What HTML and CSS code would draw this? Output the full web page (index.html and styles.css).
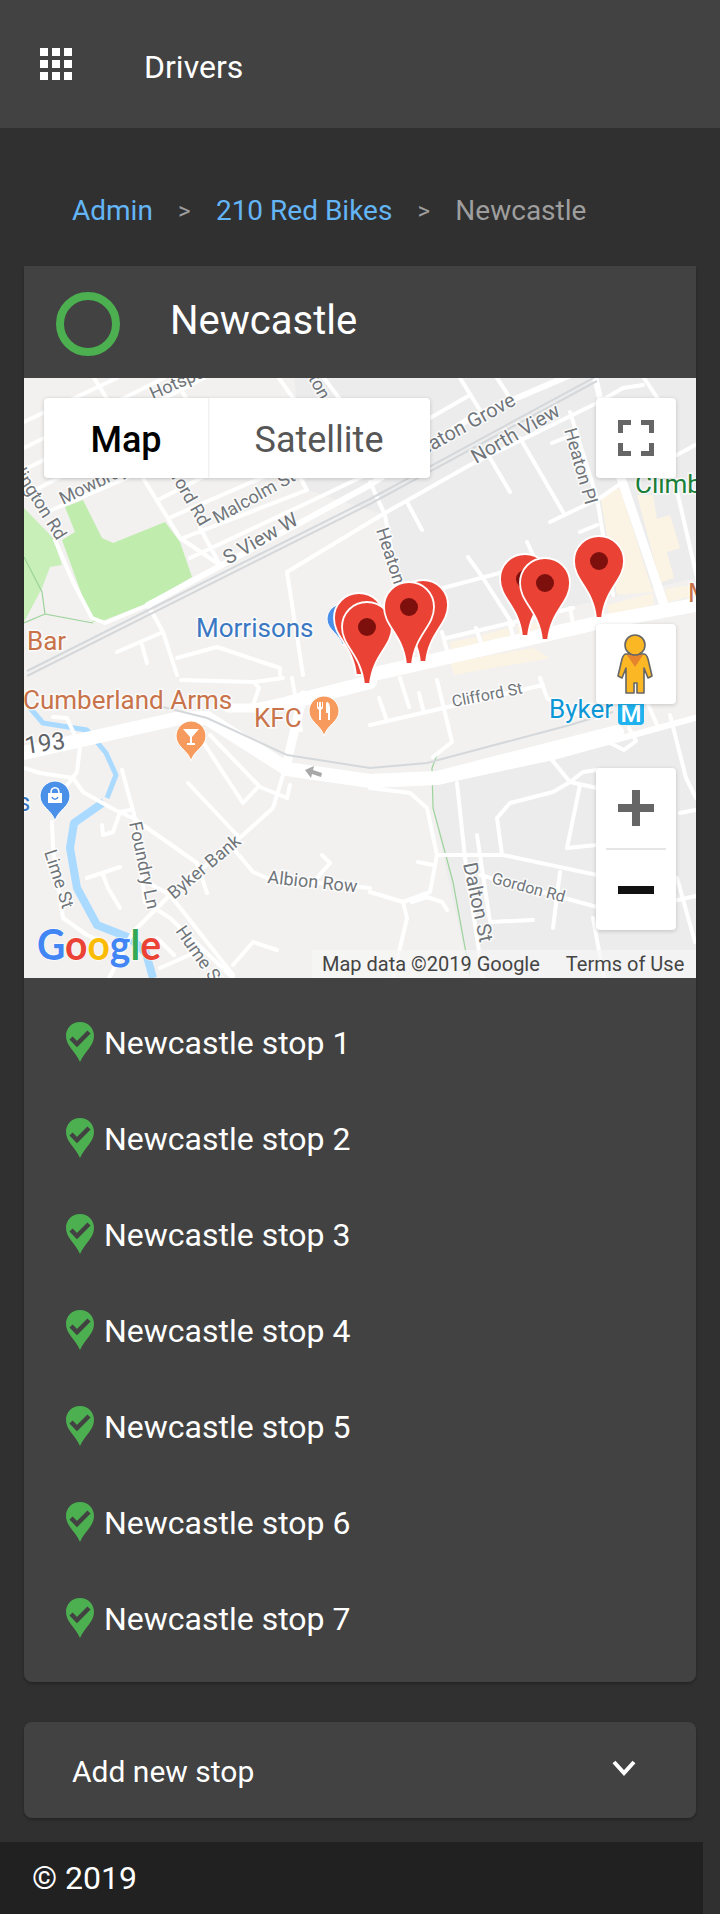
FILE: index.html
```html
<!DOCTYPE html>
<html lang="en">
<head>
<meta charset="utf-8">
<title>Drivers</title>
<link rel="stylesheet" href="styles.css">
</head>
<body>
<header class="topbar">
  <svg class="apps" viewBox="0 0 32 32"><path d="M0 0h8v8H0zM12 0h8v8h-8zM24 0h8v8h-8zM0 12h8v8H0zM12 12h8v8h-8zM24 12h8v8h-8zM0 24h8v8H0zM12 24h8v8h-8zM24 24h8v8h-8z"/></svg>
  <span class="topbar-title">Drivers</span>
</header>
<nav class="crumbs">
  <a class="crumb-link">Admin</a><span class="crumb-sep">&gt;</span><a class="crumb-link">210 Red Bikes</a><span class="crumb-sep">&gt;</span><span class="crumb-current">Newcastle</span>
</nav>
<main class="card">
  <div class="card-head">
    <span class="ring"></span>
    <h1 class="card-title">Newcastle</h1>
  </div>
  <div class="map">
    <svg class="map-art" viewBox="0 0 672 600">
      <rect class="land" width="672" height="600"/>
      <path class="land-dark" d="M361 137 373 204 420 258 672 200V0H270L283 112Z"/>
      <path class="land-dark" d="M410 405 672 340V600H446L409 430Z"/>
      <path class="park-light" d="M0 130 29 160 38 187 26 189 18 210 0 244Z"/>
      <path class="park" d="M41 129 59 122 78 160 89 165 141 144 156 164 168 199 124 225 81 242 69 244 59 220 38 162 51 154Z"/>
      <path class="retail" d="M576 117 596 110 629 214 593 217ZM613 117 629 117 633 141 646 137 656 170 643 174 650 200 636 205ZM426 264 453 259 454 272 428 275ZM458 257 484 250 488 262 459 267ZM493 247 519 244 522 258 495 262ZM583 227 629 215 629 227 585 239ZM641 211 672 206 672 217 643 224ZM426 284 509 270 526 280 430 297Z"/>
      <g class="river">
        <path d="M6 330 19 345 63 352 82 375 92 397 83 420"/>
        <path class="river-wide" d="M80 424 50 445 46 470 53 510 73 547 106 560 122 575 129 600"/>
      </g>
      <path class="bound" d="M0 179 18 214 21 236 69 245M0 245 21 236M413 377 408 390 409 430 429 504 446 597"/>
      <g class="road">
        <!-- north-west terraces -->
        <path d="M0 44 93 0M0 70 140 0M0 92 180 0M0 118 60 86M23 134 103 100M134 122 183 97M145 140 283 80M159 160 283 112 268 85M166 180 283 125 346 95M119 100 156 160 196 187M176 150 196 187M70 0 98 45M150 0 180 50M255 0 283 40M300 0 330 40"/>
        <path d="M31 162 49 204 68 240 81 245 124 227"/>
        <path d="M124 227 139 254 153 297M93 274 139 254M118 267 123 285M153 280 193 269 256 290 256 297M263 194 279 297"/>
        <!-- north-east -->
        <path d="M263 194 346 144 361 135 446 87 573 25 599 10 619 7"/>
        <path d="M436 0 459 37M473 0 486 20M406 40 446 17M346 104 361 137 373 204M383 124 398 152M466 80 486 114M496 60 539 134M526 144 576 120 599 104M546 34 573 120 589 217M556 154 573 147M528 65 543 59M653 77 671 67M620 0 640 30 650 100 680 230M503 164 509 177M444 179 459 200 489 247M419 210 506 187M418 254 426 284M452 250 458 268M485 244 490 262M546 230 550 250M423 260 549 230"/>
        <!-- south-west -->
        <path d="M29 339 43 340 56 369 53 394 41 410M0 390 16 395 49 400 59 414 91 432 109 440 173 485 183 515M78 447 79 457 89 454 96 434 106 432M63 500 96 489M79 497 84 510 96 530M28 444 29 470 39 540 63 557 85 567M98 392 111 440 121 524 146 540 209 600M123 504 146 517 209 597M85 600 109 554 146 517 219 457 249 430 259 397M179 364 219 425 234 409M186 357 236 409 263 420 266 407M164 405 213 457M209 470 229 494 243 500 346 510M298 477 306 485 293 500M209 587 229 564 253 572M133 560 150 577M136 590 170 575"/>
        <path d="M157 302 230 304 259 300M230 304 235 310 228 330M277 352 268 300"/>
        <!-- south-east -->
        <path d="M346 410 386 415 403 430 413 477 406 514 379 524 346 514M394 484 409 487M379 524 383 540 369 600M388 524 403 519 418 524 423 532"/>
        <path d="M433 405 441 480 459 600M453 457 466 544 509 542M413 477 479 477 573 497M456 497 573 529M536 494 529 550M556 407 543 470 573 467M473 440 486 425 529 414 546 404 559 394 573 392M473 440 478 477M528 382 546 404 573 410M656 435 671 432M646 337 662 400 672 420M653 500 671 564M569 540 580 600M640 525 672 518"/>
        <!-- shops -->
        <path d="M346 347 519 307M376 300 385 329M413 302 428 364 409 379M516 300 523 320 546 334 573 340M623 324 633 347M586 365 600 372 612 363 605 350M355 320 362 340M395 315 400 335"/>
      </g>
      <g class="road road-main">
        <path d="M-5 376 156 340 183 340 249 382 263 391 346 403 413 400 593 354"/>
        <path d="M264 325 346 304"/>
        <path d="M346 297 573 245 672 227"/>
      </g>
      <path class="road road-mid" d="M279 317 263 384M279 320 230 330 204 330M596 97 639 224"/>
      <path class="road road-fine" d="M413 404 529 379 671 340M124 227 346 107 446 40 563 -10M570 -5 576 20"/>
      <g class="rail">
        <path d="M3 293 346 121 573 -2"/>
        <path d="M3 298 346 126 573 3"/>
        <path d="M139 329 183 340 263 377 346 390 403 385 463 369 546 347 589 334"/>
      </g>
      <path class="arrow" d="M281 392 290 388 289 392 298 395 297 399 288 396 287 400Z"/>

      <g class="label">
        <text x="129" y="22" transform="rotate(-24 129 22)">Hotspur</text>
        <text x="284" y="0" transform="rotate(62 284 0)">ton</text>
        <text x="39" y="127" transform="rotate(-26 39 127)">Mowbray</text>
        <text x="176" y="149" text-anchor="end" transform="rotate(60 176 149)">Guildford Rd</text>
        <text x="33" y="163" text-anchor="end" transform="rotate(58 33 163)">Addington Rd</text>
        <text x="193" y="146" transform="rotate(-29 193 146)">Malcolm St</text>
        <text x="204" y="187" transform="rotate(-30 204 187)" class="label-lg">S View W</text>
        <text x="493" y="26" text-anchor="end" transform="rotate(-29 493 26)" class="label-lg">Heaton Grove</text>
        <text x="452" y="86" transform="rotate(-30 452 86)" class="label-lg">North View</text>
        <text x="540" y="52" transform="rotate(74 540 52)">Heaton Pl</text>
        <text x="352" y="152" transform="rotate(72 352 152)">Heaton</text>
        <text x="429" y="329" transform="rotate(-11 429 329)" class="label-sm">Clifford St</text>
        <text x="20" y="474" transform="rotate(72 20 474)">Lime St</text>
        <text x="105" y="445" transform="rotate(78 105 445)">Foundry Ln</text>
        <text x="150" y="522" transform="rotate(-40 150 522)">Byker Bank</text>
        <text x="243" y="505" transform="rotate(6 243 505)">Albion Row</text>
        <text x="151" y="553" transform="rotate(55 151 553)">Hume St</text>
        <text x="439" y="486" transform="rotate(78 439 486)" class="label-lg">Dalton St</text>
        <text x="467" y="505" transform="rotate(15 467 505)" class="label-sm">Gordon Rd</text>
        <text x="2" y="376" transform="rotate(-8 2 376)" class="label-road">193</text>
      </g>
      <g class="poi">
        <text x="3" y="272" class="poi-food">Bar</text>
        <text x="172" y="259" class="poi-shop">Morrisons</text>
        <text x="-1" y="331" class="poi-food">Cumberland Arms</text>
        <text x="230" y="349" class="poi-food">KFC</text>
        <text x="611" y="115" class="poi-green">Climb</text>
        <text x="664" y="224" class="poi-food">M</text>
        <text x="525" y="340" class="poi-transit">Byker</text>
        <text x="-7" y="433" class="poi-shop">s</text>
      </g>
      <path class="poi-blue" d="M318 226C326 226 333 233 333 241 333 252 322 256 319 268 316 256 303 252 303 241 303 233 310 226 318 226Z"/>
      <g transform="translate(167 358)">
        <path class="poi-orange" d="M0-15C8-15 15-8 15 0 15 11 3 14 0 25-3 14-15 11-15 0-15-8-8-15 0-15Z"/>
        <path class="poi-glyph" d="M-8-7H8L1 1V7H4V9H-4V7H-1V1Z"/>
      </g>
      <g transform="translate(300 333)">
        <path class="poi-orange" d="M0-15C8-15 15-8 15 0 15 11 3 14 0 25-3 14-15 11-15 0-15-8-8-15 0-15Z"/>
        <path class="poi-glyph" d="M-7-9V-3L-5-1V9H-3V-1L-1-3V-9H-2V-4H-3V-9H-5V-4H-6V-9ZM3-9C5-9 6-6 6-2V9H4V2H2V-5C2-7 2-9 3-9Z"/>
      </g>
      <g transform="translate(31 418)">
        <path class="poi-bluefill" d="M0-15C8-15 15-8 15 0 15 11 3 14 0 25-3 14-15 11-15 0-15-8-8-15 0-15Z"/>
        <path class="poi-glyph" d="M-7-3H7V7H-7Z"/>
        <path class="poi-bag" d="M-4-3C-4-10 4-10 4-3"/>
        <path class="poi-smile" d="M-3 1C-2 4 2 4 3 1"/>
      </g>
      <rect class="metro" x="594" y="322" width="26" height="25" rx="4"/>
      <text x="607" y="344" text-anchor="middle" class="metro-m">M</text>
      <g class="pins">
        <g transform="translate(335 215)"><path class="pin" d="M0 0C-14 0-25 11-25 25-25 45-6 52-3 82H3C6 52 25 45 25 25 25 11 14 0 0 0Z"/></g>
        <g transform="translate(343 224)"><path class="pin" d="M0 0C-14 0-25 11-25 25-25 45-6 52-3 82H3C6 52 25 45 25 25 25 11 14 0 0 0Z"/><circle class="pin-dot" cy="25" r="9"/></g>
        <g transform="translate(399 202)"><path class="pin" d="M0 0C-14 0-25 11-25 25-25 45-6 52-3 82H3C6 52 25 45 25 25 25 11 14 0 0 0Z"/></g>
        <g transform="translate(385 204)"><path class="pin" d="M0 0C-14 0-25 11-25 25-25 45-6 52-3 82H3C6 52 25 45 25 25 25 11 14 0 0 0Z"/><circle class="pin-dot" cy="25" r="9"/></g>
        <g transform="translate(501 176)"><path class="pin" d="M0 0C-14 0-25 11-25 25-25 45-6 52-3 82H3C6 52 25 45 25 25 25 11 14 0 0 0Z"/><circle class="pin-dot" cy="25" r="9"/></g>
        <g transform="translate(521 180)"><path class="pin" d="M0 0C-14 0-25 11-25 25-25 45-6 52-3 82H3C6 52 25 45 25 25 25 11 14 0 0 0Z"/><circle class="pin-dot" cy="25" r="9"/></g>
        <g transform="translate(575 158)"><path class="pin" d="M0 0C-14 0-25 11-25 25-25 45-6 52-3 82H3C6 52 25 45 25 25 25 11 14 0 0 0Z"/><circle class="pin-dot" cy="25" r="9"/></g>
      </g>
      <text x="13" y="582" class="google" textLength="124" lengthAdjust="spacingAndGlyphs"><tspan class="g-blue">G</tspan><tspan class="g-red">o</tspan><tspan class="g-yellow">o</tspan><tspan class="g-blue">g</tspan><tspan class="g-green">l</tspan><tspan class="g-red">e</tspan></text>
    </svg>
    <div class="map-type">
      <span class="map-type-btn map-type-on">Map</span>
      <span class="map-type-btn">Satellite</span>
    </div>
    <div class="map-tile map-full">
      <svg class="tile-icon" viewBox="0 0 36 36"><path d="M0 0H13V5H5V13H0ZM23 0H36V13H31V5H23ZM0 23H5V31H13V36H0ZM31 23H36V36H23V31H31Z"/></svg>
    </div>
    <div class="map-tile map-peg">
      <svg class="peg-icon" viewBox="0 0 80 80">
        <path class="peg-body" d="M30 30H48C50 30 51 32 52 35L56 52 52 54 48 44V69H41V59H38V69H30V44L26 54 22 52 26 35C27 32 28 30 30 30Z"/>
        <path class="peg-neck" d="M31 31H47L39 43Z"/>
        <circle class="peg-body" cx="39" cy="21" r="10"/>
      </svg>
    </div>
    <div class="map-zoom">
      <div class="zoom-btn"><svg class="tile-icon" viewBox="0 0 36 36"><path d="M14 0H22V14H36V22H22V36H14V22H0V14H14Z"/></svg></div>
      <div class="zoom-rule"></div>
      <div class="zoom-btn"><svg class="tile-icon tile-icon-dark" viewBox="0 0 36 36"><path d="M0 14H36V22H0Z"/></svg></div>
    </div>
    <div class="map-attr"><span>Map data ©2019 Google</span><span>Terms of Use</span></div>
  </div>
  <ul class="stops">
    <li class="stop"><svg class="stop-pin" viewBox="0 0 28 40"><path class="stop-pin-fill" d="M14 0C6 0 0 6 0 14 0 24 10 30 14 40 18 30 28 24 28 14 28 6 22 0 14 0Z"/><path class="stop-pin-check" d="M5 16 11 22 23 10"/></svg><span class="stop-name">Newcastle stop 1</span></li>
    <li class="stop"><svg class="stop-pin" viewBox="0 0 28 40"><path class="stop-pin-fill" d="M14 0C6 0 0 6 0 14 0 24 10 30 14 40 18 30 28 24 28 14 28 6 22 0 14 0Z"/><path class="stop-pin-check" d="M5 16 11 22 23 10"/></svg><span class="stop-name">Newcastle stop 2</span></li>
    <li class="stop"><svg class="stop-pin" viewBox="0 0 28 40"><path class="stop-pin-fill" d="M14 0C6 0 0 6 0 14 0 24 10 30 14 40 18 30 28 24 28 14 28 6 22 0 14 0Z"/><path class="stop-pin-check" d="M5 16 11 22 23 10"/></svg><span class="stop-name">Newcastle stop 3</span></li>
    <li class="stop"><svg class="stop-pin" viewBox="0 0 28 40"><path class="stop-pin-fill" d="M14 0C6 0 0 6 0 14 0 24 10 30 14 40 18 30 28 24 28 14 28 6 22 0 14 0Z"/><path class="stop-pin-check" d="M5 16 11 22 23 10"/></svg><span class="stop-name">Newcastle stop 4</span></li>
    <li class="stop"><svg class="stop-pin" viewBox="0 0 28 40"><path class="stop-pin-fill" d="M14 0C6 0 0 6 0 14 0 24 10 30 14 40 18 30 28 24 28 14 28 6 22 0 14 0Z"/><path class="stop-pin-check" d="M5 16 11 22 23 10"/></svg><span class="stop-name">Newcastle stop 5</span></li>
    <li class="stop"><svg class="stop-pin" viewBox="0 0 28 40"><path class="stop-pin-fill" d="M14 0C6 0 0 6 0 14 0 24 10 30 14 40 18 30 28 24 28 14 28 6 22 0 14 0Z"/><path class="stop-pin-check" d="M5 16 11 22 23 10"/></svg><span class="stop-name">Newcastle stop 6</span></li>
    <li class="stop"><svg class="stop-pin" viewBox="0 0 28 40"><path class="stop-pin-fill" d="M14 0C6 0 0 6 0 14 0 24 10 30 14 40 18 30 28 24 28 14 28 6 22 0 14 0Z"/><path class="stop-pin-check" d="M5 16 11 22 23 10"/></svg><span class="stop-name">Newcastle stop 7</span></li>
  </ul>
</main>
<section class="add-stop">
  <span class="add-label">Add new stop</span>
  <svg class="chevron" viewBox="0 0 24 16"><path d="M2 2 12 13 22 2"/></svg>
</section>
<footer class="foot">© 2019</footer>
</body>
</html>
```
FILE: styles.css
```css
* { box-sizing: border-box; }
html, body { margin: 0; padding: 0; }
body {
  width: 720px;
  height: 1914px;
  overflow: hidden;
  background: #303030;
  color: #fff;
  font-family: Roboto, "Liberation Sans", sans-serif;
}
.topbar {
  display: flex;
  align-items: center;
  height: 128px;
  padding-left: 40px;
  background: #424242;
}
.apps { width: 32px; height: 32px; fill: #fff; flex: none; }
.topbar-title { margin: 6px 0 0 72px; font-size: 32px; line-height: 36px; }
.crumbs {
  display: flex;
  align-items: center;
  height: 138px;
  padding: 27px 0 0 72px;
  font-size: 28px;
  color: #9e9e9e;
}
.crumb-link { color: #64b5f6; }
.crumb-sep { width: 63px; text-align: center; font-size: 24px; color: #9e9e9e; }
.crumb-current { color: #9e9e9e; }
.card {
  width: 672px;
  height: 1416px;
  margin-left: 24px;
  background: #424242;
  border-radius: 0 0 8px 8px;
  box-shadow: 0 2px 3px rgba(0,0,0,.25);
}
.card-head { display: flex; align-items: center; height: 112px; padding-left: 32px; }
.ring { width: 64px; height: 64px; margin-top: 4px; border: 8px solid #4caf50; border-radius: 50%; flex: none; }
.card-title { margin: 0 0 2px 50px; font-size: 40px; font-weight: 400; line-height: 48px; }
.map { position: relative; width: 672px; height: 600px; overflow: hidden; }
.map-art { display: block; width: 672px; height: 600px; }
.land { fill: #f2f1f0; }
.land-dark { fill: #ececec; }
.park { fill: #c0ecae; }
.park-light { fill: #c8efb8; }
.retail { fill: #fbf3e3; }
.river path { fill: none; stroke: #aadaff; stroke-width: 5; stroke-linejoin: round; }
.river .river-wide { stroke-width: 8; }
.bound { fill: none; stroke: #9cd39a; stroke-width: 1.2; }
.road path, .road { fill: none; stroke: #fff; stroke-width: 4; stroke-linecap: round; stroke-linejoin: round; }
.road-main path { stroke-width: 14; }
.road-mid { stroke-width: 9; }
.road-fine { stroke-width: 6; }
.rail path { fill: none; stroke: #d5d8db; stroke-width: 2; }
.arrow { fill: #a8a8a8; }
.label text {
  font-size: 18px;
  fill: #70757a;
  stroke: #fff;
  stroke-width: 3px;
  paint-order: stroke;
  stroke-opacity: .75;
}
.label .label-lg { font-size: 20px; }
.label .label-sm { font-size: 16px; }
.label .label-road { font-size: 24px; fill: #5f6368; }
.poi text {
  font-size: 26px;
  stroke: #fff;
  stroke-width: 3px;
  paint-order: stroke;
  stroke-opacity: .7;
}
.poi .poi-food { fill: #c9734a; }
.poi .poi-shop { fill: #3b78c3; }
.poi .poi-green { fill: #188038; }
.poi .poi-transit { fill: #0d97d6; }
.poi-blue, .poi-bluefill { fill: #4a90e8; stroke: #fff; stroke-width: 1; }
.poi-orange { fill: #f69a5d; stroke: #fff; stroke-width: 1; }
.poi-glyph { fill: #fff; }
.poi-bag { fill: none; stroke: #fff; stroke-width: 1.6; }
.poi-smile { fill: none; stroke: #4a90e8; stroke-width: 1.4; }
.metro { fill: #1fb2ee; }
.metro-m { font-size: 24px; font-weight: 500; fill: #fff; }
.pin { fill: #ea4335; stroke: #fff; stroke-width: 1.8; }
.pin-dot { fill: #7d0f0c; }
.google {
  font-family: Lato, Roboto, sans-serif;
  font-size: 42px;
  font-weight: 700;
  stroke: #fff;
  stroke-width: 1.5px;
  paint-order: stroke;
  stroke-opacity: .7;
}
.g-blue { fill: #4285f4; }
.g-red { fill: #ea4335; }
.g-yellow { fill: #fbbc05; }
.g-green { fill: #34a853; }
.map-type {
  position: absolute;
  left: 20px;
  top: 20px;
  display: flex;
  width: 386px;
  height: 80px;
  border-radius: 4px;
  background: #fff;
  box-shadow: 0 1px 4px rgba(0,0,0,.18);
  font-size: 36px;
  color: #565656;
}
.map-type-btn { display: flex; align-items: center; justify-content: center; flex: 1 1 222px; padding-top: 3px; }
.map-type-on {
  flex: 0 0 164px;
  color: #000;
  font-weight: 500;
  border-radius: 4px 0 0 4px;
  box-shadow: 1px 0 2px rgba(0,0,0,.08);
}
.map-tile {
  position: absolute;
  left: 572px;
  display: flex;
  align-items: center;
  justify-content: center;
  width: 80px;
  height: 80px;
  border-radius: 4px;
  background: #fff;
  box-shadow: 0 1px 4px rgba(0,0,0,.18);
}
.map-full { top: 20px; }
.map-peg { top: 246px; }
.tile-icon { width: 36px; height: 36px; fill: #666; }
.tile-icon-dark { fill: #111; }
.peg-icon { width: 80px; height: 80px; }
.peg-body { fill: #fbb824; stroke: #666; stroke-width: 1.6; stroke-linejoin: round; }
.peg-neck { fill: #e5842c; }
.map-zoom {
  position: absolute;
  left: 572px;
  top: 390px;
  width: 80px;
  height: 162px;
  display: flex;
  flex-direction: column;
  align-items: center;
  border-radius: 4px;
  background: #fff;
  box-shadow: 0 1px 4px rgba(0,0,0,.18);
}
.zoom-btn { display: flex; align-items: center; justify-content: center; width: 80px; height: 80px; }
.zoom-rule { width: 60px; height: 2px; background: #e6e6e6; }
.map-attr {
  position: absolute;
  right: 0;
  bottom: 0;
  display: flex;
  gap: 26px;
  align-items: center;
  width: 384px;
  height: 28px;
  padding-left: 10px;
  background: rgba(245,245,245,.75);
  font-size: 20px;
  color: #444;
}
.stops { margin: 0; padding: 16px 0 0 42px; list-style: none; }
.stop { display: flex; align-items: center; height: 96px; font-size: 32px; }
.stop-pin { width: 28px; height: 40px; margin-right: 10px; flex: none; }
.stop-pin-fill { fill: #4caf50; }
.stop-pin-check { fill: none; stroke: #424242; stroke-width: 4.5; }
.stop-name { margin-top: 2px; }
.add-stop {
  display: flex;
  align-items: center;
  justify-content: space-between;
  width: 672px;
  height: 96px;
  margin: 40px 0 0 24px;
  padding: 0 60px 0 48px;
  background: #424242;
  border-radius: 8px;
  box-shadow: 0 2px 3px rgba(0,0,0,.25);
}
.add-label { margin-top: 2px; font-size: 30px; }
.chevron { width: 24px; height: 16px; margin-top: -4px; fill: none; stroke: #fff; stroke-width: 4; }
.foot {
  display: flex;
  align-items: center;
  width: 703px;
  height: 72px;
  margin-top: 24px;
  padding-left: 32px;
  background: #212121;
  font-size: 32px;
}
```
